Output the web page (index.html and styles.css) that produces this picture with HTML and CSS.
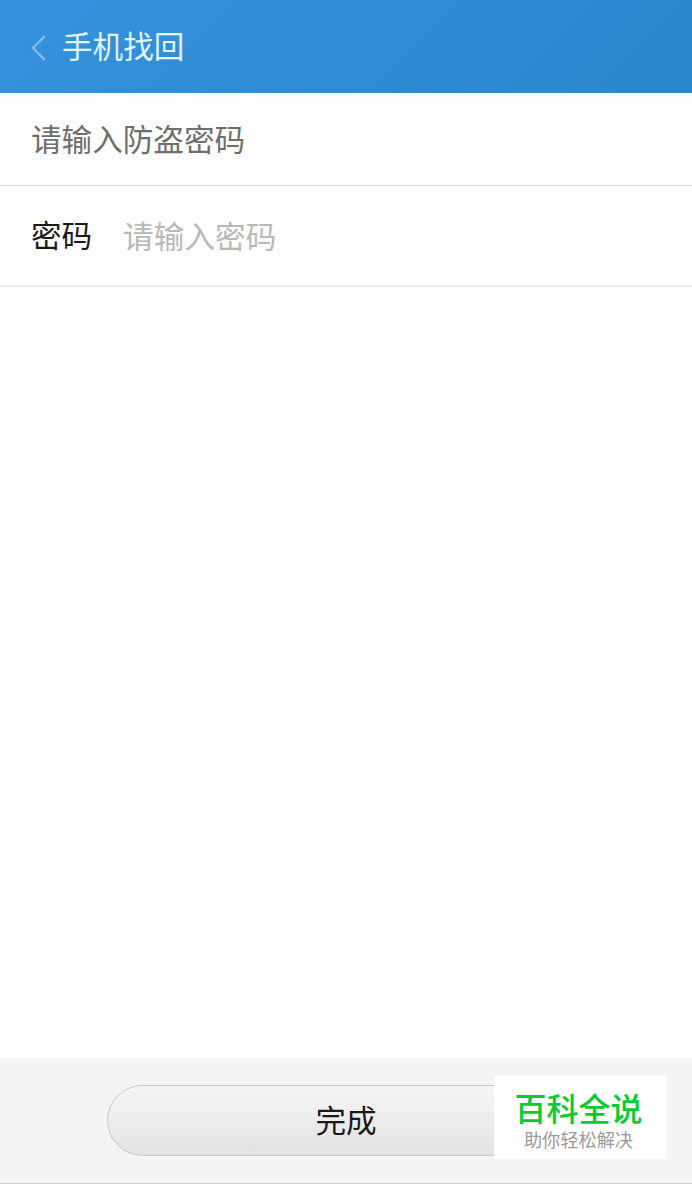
FILE: index.html
```
<!DOCTYPE html>
<html lang="zh-CN">

<head>
    <meta charset="UTF-8">
    <title>手机找回</title>
    <link rel="stylesheet" href="styles.css">
</head>

<body>
    <div class="page">
        <header class="header">
            <svg class="back" width="16" height="26" viewBox="0 0 16 26">
                <path d="M13.7 1.2L2 13l11.7 11.8" />
            </svg>
            <h1>手机找回</h1>
        </header>
        <p class="tip">请输入防盗密码</p>
        <div class="row">
            <label for="pwd">密码</label>
            <input type="password" id="pwd" placeholder="请输入密码">
        </div>
        <footer class="footer">
            <button class="btn">完成</button>
        </footer>
        <!-- 右下角水印 -->
        <div class="mark">
            <strong>百科全说</strong>
            <span>助你轻松解决</span>
        </div>
    </div>
</body>

</html>
```
FILE: styles.css
```
* {
    padding: 0;
    margin: 0;
    box-sizing: border-box;
}

body {
    font-family: "Noto Sans CJK SC", sans-serif;
    font-size: 30.6px;
    background: #fefefe;
}

.page {
    position: relative;
    display: flex;
    flex-direction: column;
    height: 1184px;
    overflow: hidden;
}

.header {
    display: flex;
    align-items: center;
    height: 93px;
    padding-left: 31px;
    background: linear-gradient(135deg, #3692dc, #2b85cb);
}

.back {
    margin: 3px 15px 0 0;
    fill: none;
    stroke: #7fbcf0;
    stroke-width: 2.4;
}

.header h1 {
    padding-bottom: 3px;
    font-size: 30.6px;
    font-weight: 400;
    color: #e0f3ff;
}

.tip {
    height: 93px;
    padding-left: 31px;
    line-height: 90px;
    color: #6e6e6e;
    border-bottom: 1px solid #dcdcdc;
}

.row {
    display: flex;
    align-items: center;
    height: 101px;
    padding: 0 0 3px 31px;
    border-bottom: 2px solid #ebebeb;
}

.row label {
    width: 92px;
    color: #1a1a1a;
}

.row input {
    flex: 1;
    height: 60px;
    font: inherit;
    font-size: 30.7px;
    border: 0;
    outline: none;
    background: none;
}

.row input::placeholder {
    color: #b8b8b8;
}

.footer {
    height: 126px;
    margin-top: auto;
    padding-top: 27px;
    text-align: center;
    background: #f4f4f4;
    border-bottom: 1px solid #d0d0d0;
}

.btn {
    width: 478px;
    height: 71px;
    padding-bottom: 3px;
    font: inherit;
    color: #1a1a1a;
    border: 1px solid #c8c8c8;
    border-radius: 36px;
    background: linear-gradient(#f6f6f6, #e2e2e2);
}

.mark {
    position: absolute;
    left: 494px;
    top: 1075px;
    width: 173px;
    height: 84px;
    padding: 10px 4px 0 0;
    text-align: center;
    background: #fff;
}

.mark strong {
    display: block;
    font-size: 32px;
    font-weight: 500;
    line-height: 44px;
    color: #0bcb33;
}

.mark span {
    display: block;
    font-size: 18.2px;
    line-height: 20px;
    color: #999;
}
```
